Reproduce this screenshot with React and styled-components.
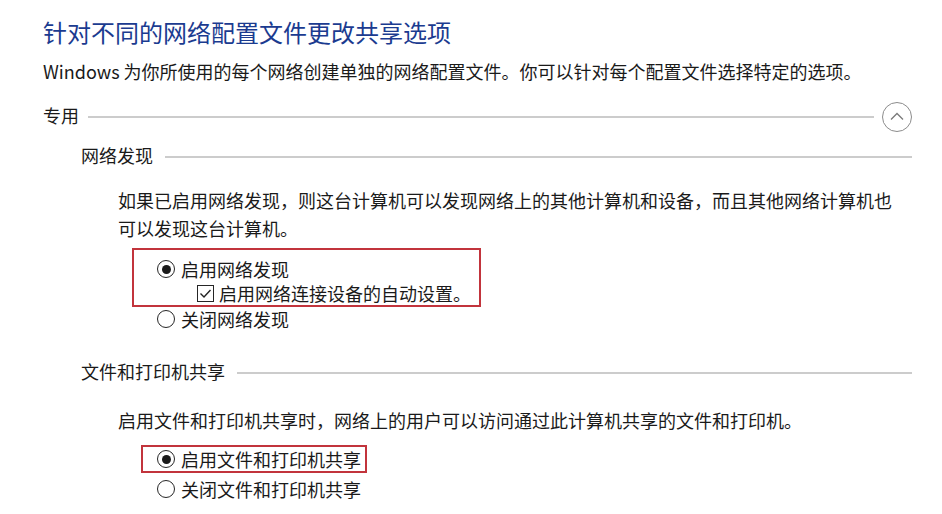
import React from "react";
import styled, { createGlobalStyle } from "styled-components";

const GlobalStyle = createGlobalStyle`
  body {
    margin: 0;
    background: #ffffff;
    font-family: "Noto Sans CJK SC", "Noto Sans", sans-serif;
    color: #1a1a1a;
  }
`;

const Page = styled.div`
  padding: 16px 30px 0 43px;
  width: 942px;
  box-sizing: border-box;
`;

const Title = styled.h1`
  margin: 0;
  font-size: 24px;
  font-weight: 400;
  line-height: 32px;
  color: #1b3b90;
`;

const Intro = styled.p`
  margin: 9px 0 0;
  font-size: 18px;
  line-height: 28px;
`;

const HeaderRow = styled.div`
  display: flex;
  align-items: center;
  height: 28px;
  margin-top: ${(p) => p.$top}px;
  font-size: 18px;
`;

const Rule = styled.div`
  flex: 1;
  height: 2px;
  background: #cccccc;
  margin-left: ${(p) => p.$gap}px;
  margin-top: 3px;
`;

const Collapse = styled.button`
  width: 30px;
  height: 30px;
  margin-left: 8px;
  padding: 0;
  border: 1px solid #8c8c8c;
  border-radius: 50%;
  background: #ffffff;
  display: flex;
  align-items: center;
  justify-content: center;
  margin-top: 3px;
`;

const SubSection = styled.section`
  margin-left: 38px;
`;

const Desc = styled.p`
  margin: ${(p) => p.$top}px 0 0 37px;
  max-width: 780px;
  font-size: 18px;
  line-height: 28px;
`;

const Options = styled.div`
  margin: ${(p) => p.$top}px 0 0 76px;
  font-size: 18px;
`;

const Highlight = styled.div`
  width: ${(p) => p.$width}px;
  box-sizing: border-box;
  border: 2px solid #c2343c;
  margin-left: -${(p) => p.$offset}px;
  padding: ${(p) => p.$padTop}px 0 0 ${(p) => p.$offset - 2}px;
`;

const OptionRow = styled.label`
  display: flex;
  align-items: center;
  height: 24px;
  gap: ${(p) => (p.$check ? 5 : 6)}px;
  padding-left: ${(p) => (p.$check ? 40 : 0)}px;
  margin-top: ${(p) => p.$top || 0}px;
`;

const Radio = styled.span`
  width: 18px;
  height: 18px;
  box-sizing: border-box;
  border: 1.5px solid #262626;
  border-radius: 50%;
  display: flex;
  align-items: center;
  justify-content: center;
  flex-shrink: 0;
  &::after {
    content: "";
    width: 9px;
    height: 9px;
    border-radius: 50%;
    background: ${(p) => (p.$on ? "#1a1a1a" : "transparent")};
  }
`;

const Check = styled.span`
  width: 17px;
  height: 17px;
  box-sizing: border-box;
  border: 1.5px solid #262626;
  display: flex;
  align-items: center;
  justify-content: center;
  flex-shrink: 0;
`;

function RadioOption({ on, children, top }) {
  return (
    <OptionRow $top={top}>
      <Radio $on={on} />
      <span>{children}</span>
    </OptionRow>
  );
}

export default function App() {
  return (
    <Page>
      <GlobalStyle />
      <Title>针对不同的网络配置文件更改共享选项</Title>
      <Intro>Windows 为你所使用的每个网络创建单独的网络配置文件。你可以针对每个配置文件选择特定的选项。</Intro>

      <HeaderRow $top={16}>
        <span>专用</span>
        <Rule $gap={9} />
        <Collapse aria-label="折叠">
          <svg width="14" height="9" viewBox="0 0 14 9">
            <path d="M1 7.5 L7 1.5 L13 7.5" fill="none" stroke="#7a7a7a" strokeWidth="1.3" />
          </svg>
        </Collapse>
      </HeaderRow>

      <SubSection>
        <HeaderRow $top={12}>
          <span>网络发现</span>
          <Rule $gap={12} />
        </HeaderRow>
        <Desc $top={17}>
          如果已启用网络发现，则这台计算机可以发现网络上的其他计算机和设备，而且其他网络计算机也可以发现这台计算机。
        </Desc>
        <Options $top={6}>
          <Highlight $width={349} $offset={25} $padTop={7}>
            <RadioOption on>启用网络发现</RadioOption>
            <OptionRow $check>
              <Check>
                <svg width="13" height="11" viewBox="0 0 13 11">
                  <path d="M1.5 5.5 L5 9 L11.5 2" fill="none" stroke="#222" strokeWidth="1.4" />
                </svg>
              </Check>
              <span>启用网络连接设备的自动设置。</span>
            </OptionRow>
          </Highlight>
          <RadioOption>关闭网络发现</RadioOption>
        </Options>

        <HeaderRow $top={26}>
          <span>文件和打印机共享</span>
          <Rule $gap={12} />
        </HeaderRow>
        <Desc $top={21}>启用文件和打印机共享时，网络上的用户可以访问通过此计算机共享的文件和打印机。</Desc>
        <Options $top={11}>
          <Highlight $width={226} $offset={16} $padTop={0}>
            <RadioOption on>启用文件和打印机共享</RadioOption>
          </Highlight>
          <RadioOption top={4}>关闭文件和打印机共享</RadioOption>
        </Options>
      </SubSection>
    </Page>
  );
}
